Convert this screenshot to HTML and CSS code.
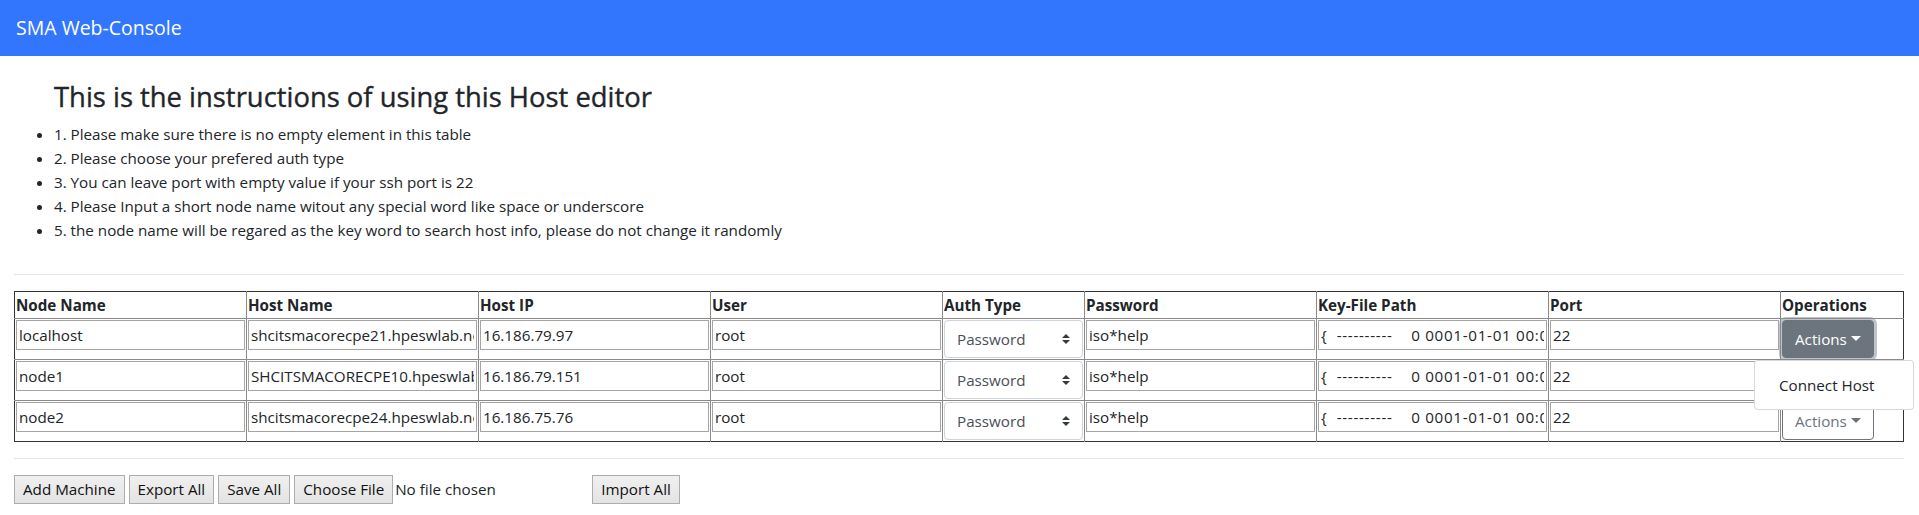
FILE: index.html
```html
<!DOCTYPE html>
<html lang="en">
<head>
<meta charset="utf-8">
<title>SMA Web-Console</title>
<link rel="stylesheet" href="styles.css">
</head>
<body>
<nav class="navbar"><span class="brand">SMA Web-Console</span></nav>
<main class="page">
  <h3 class="title">This is the instructions of using this Host editor</h3>
  <ul class="rules">
    <li>1. Please make sure there is no empty element in this table</li>
    <li>2. Please choose your prefered auth type</li>
    <li>3. You can leave port with empty value if your ssh port is 22</li>
    <li>4. Please Input a short node name witout any special word like space or underscore</li>
    <li>5. the node name will be regared as the key word to search host info, please do not change it randomly</li>
  </ul>
  <hr class="sep">
  <table class="hosts">
    <colgroup>
      <col class="c-text"><col class="c-text"><col class="c-text"><col class="c-text">
      <col class="c-auth"><col class="c-text"><col class="c-text"><col class="c-text"><col class="c-ops">
    </colgroup>
    <thead>
      <tr><th>Node Name</th><th>Host Name</th><th>Host IP</th><th>User</th><th>Auth Type</th><th>Password</th><th>Key-File Path</th><th>Port</th><th>Operations</th></tr>
    </thead>
    <tbody>
      <tr>
        <td><input class="field" type="text" value="localhost"></td>
        <td><input class="field" type="text" value="shcitsmacorecpe21.hpeswlab.net"></td>
        <td><input class="field" type="text" value="16.186.79.97"></td>
        <td><input class="field" type="text" value="root"></td>
        <td><select class="auth"><option>Password</option><option>Key File</option></select></td>
        <td><input class="field" type="text" value="iso*help"></td>
        <td><input class="field field-key" type="text" value="{  ----------    0 0001-01-01 00:00:00 +0000 UTC}"></td>
        <td><input class="field" type="text" value="22"></td>
        <td>
          <div class="dropdown">
            <button class="btn btn-active" type="button">Actions<span class="caret"></span></button>
            <div class="menu"><a class="menu-item">Connect Host</a></div>
          </div>
        </td>
      </tr>
      <tr>
        <td><input class="field" type="text" value="node1"></td>
        <td><input class="field" type="text" value="SHCITSMACORECPE10.hpeswlab.net"></td>
        <td><input class="field" type="text" value="16.186.79.151"></td>
        <td><input class="field" type="text" value="root"></td>
        <td><select class="auth"><option>Password</option><option>Key File</option></select></td>
        <td><input class="field" type="text" value="iso*help"></td>
        <td><input class="field field-key" type="text" value="{  ----------    0 0001-01-01 00:00:00 +0000 UTC}"></td>
        <td><input class="field" type="text" value="22"></td>
        <td><div class="dropdown"><button class="btn btn-outline" type="button">Actions<span class="caret"></span></button></div></td>
      </tr>
      <tr>
        <td><input class="field" type="text" value="node2"></td>
        <td><input class="field" type="text" value="shcitsmacorecpe24.hpeswlab.net"></td>
        <td><input class="field" type="text" value="16.186.75.76"></td>
        <td><input class="field" type="text" value="root"></td>
        <td><select class="auth"><option>Password</option><option>Key File</option></select></td>
        <td><input class="field" type="text" value="iso*help"></td>
        <td><input class="field field-key" type="text" value="{  ----------    0 0001-01-01 00:00:00 +0000 UTC}"></td>
        <td><input class="field" type="text" value="22"></td>
        <td><div class="dropdown"><button class="btn btn-outline" type="button">Actions<span class="caret"></span></button></div></td>
      </tr>
    </tbody>
  </table>
  <hr class="sep">
  <div class="toolbar">
    <button class="sys-btn" type="button">Add Machine</button>
    <button class="sys-btn" type="button">Export All</button>
    <button class="sys-btn" type="button">Save All</button>
    <span class="file-pick"><button class="sys-btn" type="button">Choose File</button><span class="file-name">No file chosen</span></span>
    <button class="sys-btn" type="button">Import All</button>
  </div>
</main>
</body>
</html>
```
FILE: styles.css
```css
* { box-sizing: border-box; }

body {
  margin: 0;
  font-family: "Open Sans", "Noto Sans", sans-serif;
  font-size: 15.2px;
  line-height: 24px;
  color: #212529;
  background: #fff;
}

.navbar {
  background: #3276fe;
  padding: 8px 16px;
  height: 56px;
}

.brand {
  display: inline-block;
  font-size: 19.5px;
  line-height: 30px;
  padding: 5px 0;
  color: #fff;
}

.page {
  padding: 24px 15px 0 14px;
}

.title {
  margin: 0 0 8px 40px;
  font-size: 27.4px;
  line-height: 33.6px;
  font-weight: 500;
  -webkit-text-stroke: 0.35px currentColor;
}

.rules {
  margin: 0 0 32px;
  padding-left: 40px;
}

.sep {
  margin: 16px 0;
  border: 0;
  border-top: 1px solid rgba(0, 0, 0, 0.1);
  height: 0;
}

.hosts {
  width: 100%;
  table-layout: fixed;
  border-collapse: collapse;
  border: 1px solid #333;
}

.c-text { width: 232px; }
.c-auth { width: 142px; }
.c-ops { width: 123px; }

.hosts th,
.hosts td {
  border: 1px solid #8a8a8a;
  padding: 1px;
  vertical-align: top;
  text-align: left;
}

.hosts tr > :first-child { border-left: none; }
.hosts tr > :last-child { border-right: none; }
.hosts thead tr > * { border-top: none; }
.hosts tbody tr:last-child > * { border-bottom: none; }

.hosts th {
  font-weight: 700;
  line-height: 24px;
}

.field {
  display: block;
  width: 100%;
  height: 30px;
  margin: 0;
  padding: 2px 2px;
  border: 1px solid #a5a5a5;
  font: inherit;
  line-height: 24px;
  color: #212529;
  background: #fff;
  white-space: pre;
}

.field-key {
  letter-spacing: 0.7px;
}

.auth {
  display: block;
  width: 100%;
  height: 38px;
  margin: 0;
  padding: 6px 28px 6px 12px;
  border: 1px solid #ced4da;
  border-radius: 4px;
  font: inherit;
  line-height: 24px;
  color: #495057;
  -webkit-appearance: none;
  appearance: none;
  background: #fff url("data:image/svg+xml;charset=utf8,%3Csvg xmlns='http://www.w3.org/2000/svg' viewBox='0 0 4 5'%3E%3Cpath fill='%23343a40' d='M2 0L0 2h4zm0 5L0 3h4z'/%3E%3C/svg%3E") no-repeat right 12px center;
  background-size: 8px 10px;
}

.dropdown {
  position: relative;
  display: inline-block;
}

.btn {
  display: inline-block;
  margin: 0;
  padding: 6px 12px;
  border: 1px solid #6c757d;
  border-radius: 4px;
  font: inherit;
  line-height: 24px;
  white-space: nowrap;
  cursor: pointer;
}

.btn-active {
  background: #6c757d;
  color: #fff;
  border-color: #6c757d;
  box-shadow: 0 0 0 3px rgba(130, 138, 145, 0.5);
}

.btn-outline {
  background: #fff;
  color: #6c757d;
}

.caret {
  display: inline-block;
  width: 0;
  height: 0;
  margin-left: 4px;
  vertical-align: 4px;
  border-top: 5px solid currentColor;
  border-left: 5px solid transparent;
  border-right: 5px solid transparent;
}

.menu {
  position: absolute;
  z-index: 10;
  top: calc(100% + 2px);
  left: -28px;
  min-width: 160px;
  padding: 8px 0;
  background: #fff;
  border: 1px solid rgba(0, 0, 0, 0.15);
  border-radius: 4px;
}

.menu-item {
  display: block;
  padding: 4px 24px;
  color: #212529;
  white-space: nowrap;
}

.toolbar {
  display: flex;
  align-items: center;
  gap: 4px;
}

.sys-btn {
  height: 29px;
  margin: 0;
  padding: 0 8px;
  border: 1px solid #adadad;
  border-radius: 0;
  background: linear-gradient(#f0f0f0, #e3e3e3);
  font: inherit;
  line-height: 25px;
  color: #111;
}

.file-pick {
  display: flex;
  align-items: center;
  width: 294px;
}

.file-name {
  margin-left: 2px;
}
```
